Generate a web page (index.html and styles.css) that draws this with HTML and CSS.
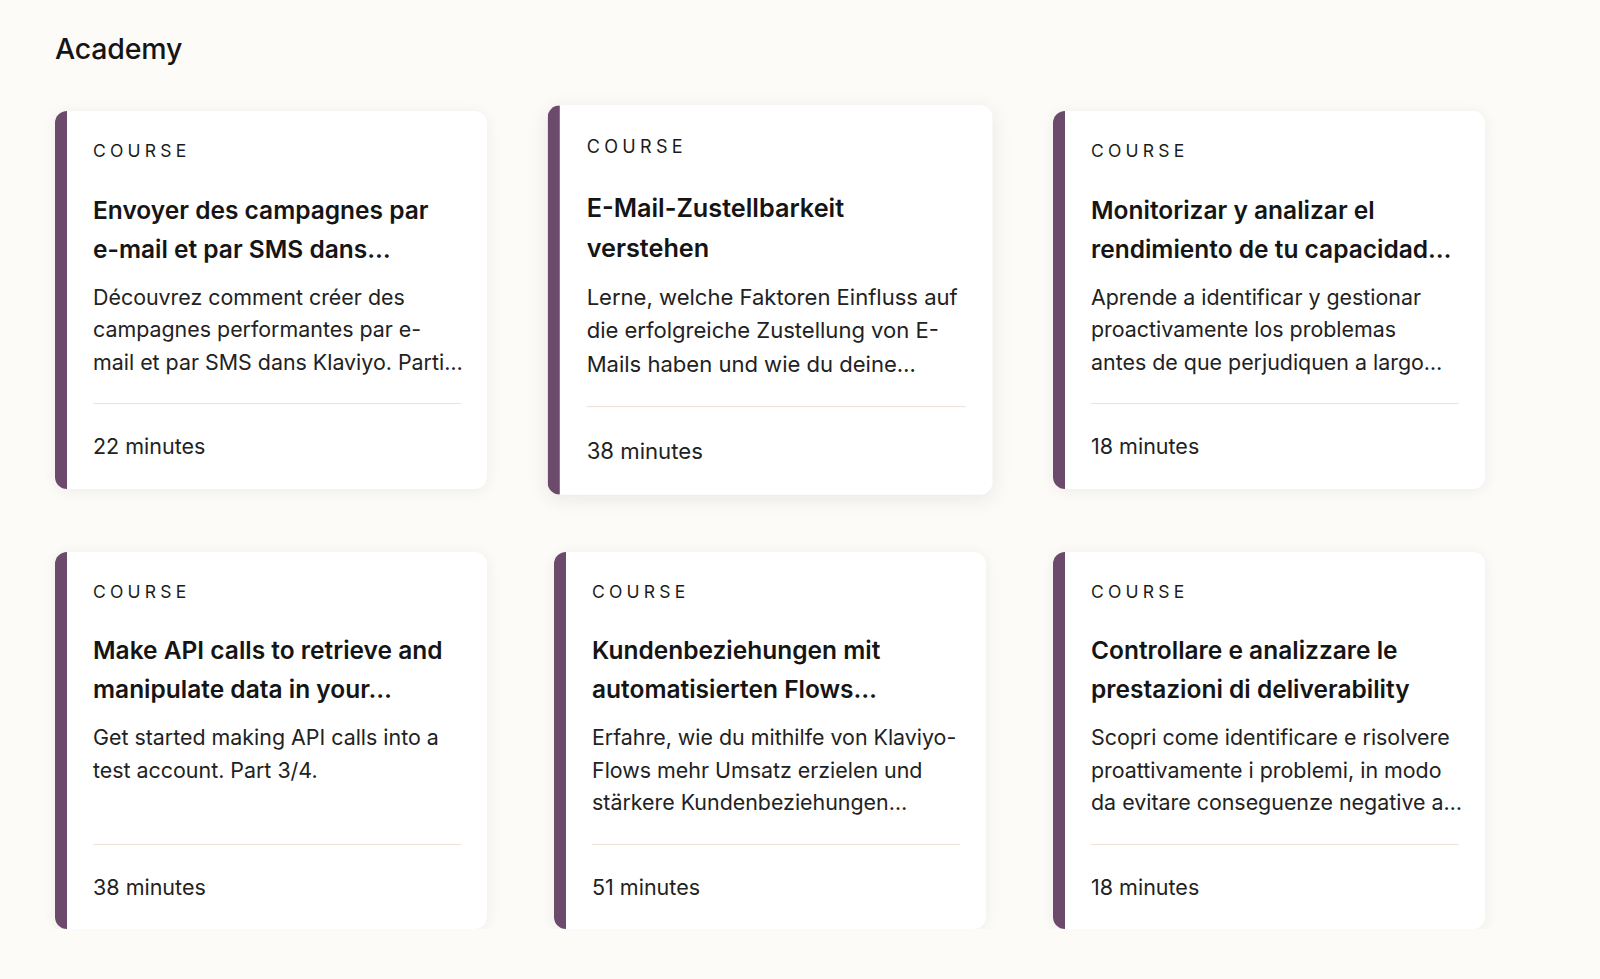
FILE: index.html
```html
<!DOCTYPE html>
<html lang="en">
<head>
<meta charset="utf-8">
<title>Academy</title>
<link rel="stylesheet" href="styles.css">
</head>
<body>
<main class="page">
  <h1 class="heading">Academy</h1>
  <div class="grid">
    <article class="card">
      <div class="label">COURSE</div>
      <h2 class="title">Envoyer des campagnes par <span class="nw">e-mail</span> et par SMS dans…</h2>
      <p class="desc">Découvrez comment créer des<br>campagnes performantes par e-<br>mail et par SMS dans Klaviyo. Parti…</p>
      <div class="divider"></div>
      <div class="meta">22 minutes</div>
    </article>
    <article class="card card-hover">
      <div class="label">COURSE</div>
      <h2 class="title">E-Mail-Zustellbarkeit verstehen</h2>
      <p class="desc">Lerne, welche Faktoren Einfluss auf<br>die erfolgreiche Zustellung von E-<br>Mails haben und wie du deine…</p>
      <div class="divider"></div>
      <div class="meta">38 minutes</div>
    </article>
    <article class="card">
      <div class="label">COURSE</div>
      <h2 class="title">Monitorizar y analizar el rendimiento de tu capacidad…</h2>
      <p class="desc">Aprende a identificar y gestionar<br>proactivamente los problemas<br>antes de que perjudiquen a largo…</p>
      <div class="divider"></div>
      <div class="meta">18 minutes</div>
    </article>
    <article class="card">
      <div class="label">COURSE</div>
      <h2 class="title">Make API calls to retrieve and manipulate data in your…</h2>
      <p class="desc">Get started making API calls into a<br>test account. Part 3/4.</p>
      <div class="divider"></div>
      <div class="meta">38 minutes</div>
    </article>
    <article class="card">
      <div class="label">COURSE</div>
      <h2 class="title">Kundenbeziehungen mit automatisierten Flows…</h2>
      <p class="desc">Erfahre, wie du mithilfe von Klaviyo-<br>Flows mehr Umsatz erzielen und<br>stärkere Kundenbeziehungen…</p>
      <div class="divider"></div>
      <div class="meta">51 minutes</div>
    </article>
    <article class="card">
      <div class="label">COURSE</div>
      <h2 class="title">Controllare e analizzare le prestazioni di deliverability</h2>
      <p class="desc">Scopri come identificare e risolvere<br>proattivamente i problemi, in modo<br>da evitare conseguenze negative a…</p>
      <div class="divider"></div>
      <div class="meta">18 minutes</div>
    </article>
  </div>
</main>
</body>
</html>
```

FILE: styles.css
```css
* { box-sizing: border-box; }
html, body {
  margin: 0;
  padding: 0;
  background: #fcfbf8;
}
body {
  font-family: Inter, "Noto Sans", "Liberation Sans", sans-serif;
  color: #1b1b1b;
}
.page {
  width: 1430px;
  margin-left: 55px;
  padding-top: 30px;
}
.heading {
  margin: 0 0 43px 0;
  font-size: 28.5px;
  line-height: 38px;
  font-weight: 500;
  letter-spacing: -0.2px;
  color: #151515;
}
.grid {
  display: grid;
  grid-template-columns: repeat(3, minmax(0, 1fr));
  column-gap: 67px;
  row-gap: 63px;
}
.card {
  min-width: 0;
  background: #ffffff;
  border-left: 12px solid #6c4a6c;
  border-radius: 12px;
  box-shadow: 0 2px 14px rgba(60, 45, 20, 0.07);
  padding: 28px 26px 26px 26px;
  display: flex;
  flex-direction: column;
}
.card-hover {
  transform: scale(1.03);
  box-shadow: 0 4px 20px rgba(60, 45, 20, 0.09);
}
.label {
  font-size: 17.5px;
  line-height: 24px;
  letter-spacing: 4.2px;
  font-weight: 400;
  color: #1b1b1b;
}
.title {
  margin: 27.5px 0 0 0;
  font-size: 24.5px;
  line-height: 39px;
  font-weight: 600;
  letter-spacing: 0;
  color: #151515;
  display: -webkit-box;
  -webkit-line-clamp: 2;
  -webkit-box-orient: vertical;
  overflow: hidden;
  height: 78px;
}
.nw { white-space: nowrap; }
.desc {
  margin: 12px 0 0 0;
  font-size: 21.4px;
  line-height: 32.5px;
  font-weight: 400;
  letter-spacing: 0;
  color: #222222;
  white-space: nowrap;
  height: 97.5px;
}
.divider {
  margin-top: 25px;
  height: 1px;
  background: #ebe2d2;
}
.meta {
  margin-top: 26px;
  font-size: 21.5px;
  line-height: 32.5px;
  color: #222222;
}
```
